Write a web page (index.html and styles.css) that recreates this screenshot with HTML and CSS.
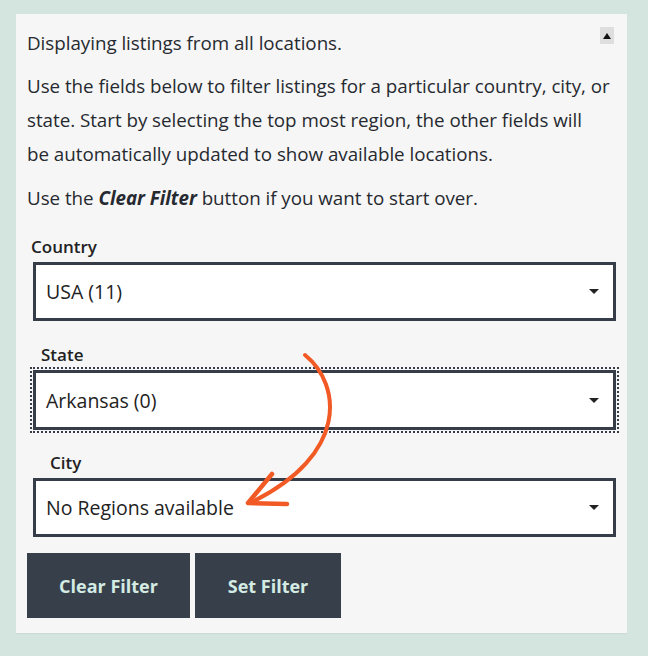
FILE: index.html
```html
<!DOCTYPE html>
<html lang="en">
<head>
<meta charset="utf-8">
<title>Location filter</title>
<link rel="stylesheet" href="styles.css">
</head>
<body>
<div class="panel">
  <button class="collapse" aria-label="Collapse">
    <svg width="8" height="6" viewBox="0 0 8 6"><path d="M0 6 L4 0 L8 6 Z" fill="#111"/></svg>
  </button>
  <p class="intro">Displaying listings from all locations.</p>
  <p>Use the fields below to filter listings for a particular country, city, or state. Start by selecting the top most region, the other fields will be&nbsp;automatically updated to show available locations.</p>
  <p>Use the <strong><em>Clear Filter</em></strong> button if you want to start over.</p>

  <div class="field">
    <label class="lbl lbl-country">Country</label>
    <div class="select">
      <span>USA (11)</span>
      <svg class="caret" width="10" height="5" viewBox="0 0 10 5"><path d="M0 0 L10 0 L5 5 Z" fill="#222"/></svg>
    </div>
  </div>

  <div class="field">
    <label class="lbl lbl-state">State</label>
    <div class="select focused">
      <span>Arkansas (0)</span>
      <svg class="caret" width="10" height="5" viewBox="0 0 10 5"><path d="M0 0 L10 0 L5 5 Z" fill="#222"/></svg>
    </div>
  </div>

  <div class="field">
    <label class="lbl lbl-city">City</label>
    <div class="select">
      <span>No Regions available</span>
      <svg class="caret" width="10" height="5" viewBox="0 0 10 5"><path d="M0 0 L10 0 L5 5 Z" fill="#222"/></svg>
    </div>
  </div>

  <div class="buttons">
    <button class="btn btn-clear">Clear Filter</button>
    <button class="btn btn-set">Set Filter</button>
  </div>

  <svg class="annot" width="648" height="656" viewBox="0 0 648 656">
    <path d="M305 355 C342 385 348 455 252 502" fill="none" stroke="#f15a24" stroke-width="4" stroke-linecap="round"/>
    <path d="M272 474 L248 503 L287 504" fill="none" stroke="#f15a24" stroke-width="4.5" stroke-linecap="round" stroke-linejoin="round"/>
  </svg>
</div>
</body>
</html>
```
FILE: styles.css
```css
html, body {
  margin: 0;
  padding: 0;
  background: #d3e5de;
}
body {
  padding: 14px 21px 23px 16px;
  font-family: "Open Sans", "Noto Sans", sans-serif;
  color: #222;
}
.panel {
  position: relative;
  background: #f6f6f6;
  width: 611px;
  box-sizing: border-box;
  padding: 12px 8px 15px 11px;
  box-shadow: 0 1px 1px rgba(0,0,0,0.04);
}
p {
  margin: 0 0 10px;
  font-size: 18.8px;
  letter-spacing: -0.03px;
  line-height: 34px;
  color: #262a30;
}
p.intro {
  margin-bottom: 9px;
}
strong em {
  font-weight: 700;
}
.collapse {
  position: absolute;
  top: 13px;
  right: 13px;
  width: 14px;
  height: 17px;
  padding: 0;
  border: 0;
  background: #dedede;
  display: flex;
  align-items: center;
  justify-content: center;
}
.field {
  display: flex;
  flex-direction: column;
}
.lbl {
  font-size: 17px;
  font-weight: 600;
  line-height: 20px;
  color: #222;
  margin-bottom: 5px;
}
.lbl-country { margin-top: 12px; padding-left: 4px; }
.lbl-state { margin-top: 24px; padding-left: 14px; }
.lbl-city { margin-top: 23px; padding-left: 23px; }
.select {
  margin-left: 6px;
  width: 583px;
  height: 59px;
  box-sizing: border-box;
  border: 3px solid #363d48;
  background: #fff;
  display: flex;
  align-items: center;
  justify-content: space-between;
  padding: 0 14px 0 10px;
  font-size: 19.5px;
  color: #222;
}
.select.focused {
  height: 60px;
  outline: 2px dotted #363d48;
  outline-offset: 1px;
}
.caret {
  display: block;
}
.buttons {
  display: flex;
  gap: 5px;
  margin-top: 16px;
}
.btn {
  height: 65px;
  border: 0;
  background: #373f4b;
  color: #d3ebe3;
  font-family: "Open Sans", "Noto Sans", sans-serif;
  font-weight: 700;
  font-size: 18px;
  padding: 0;
}
.btn-clear { width: 163px; }
.btn-set { width: 146px; }
.annot {
  position: absolute;
  left: -16px;
  top: -14px;
  pointer-events: none;
}
```
